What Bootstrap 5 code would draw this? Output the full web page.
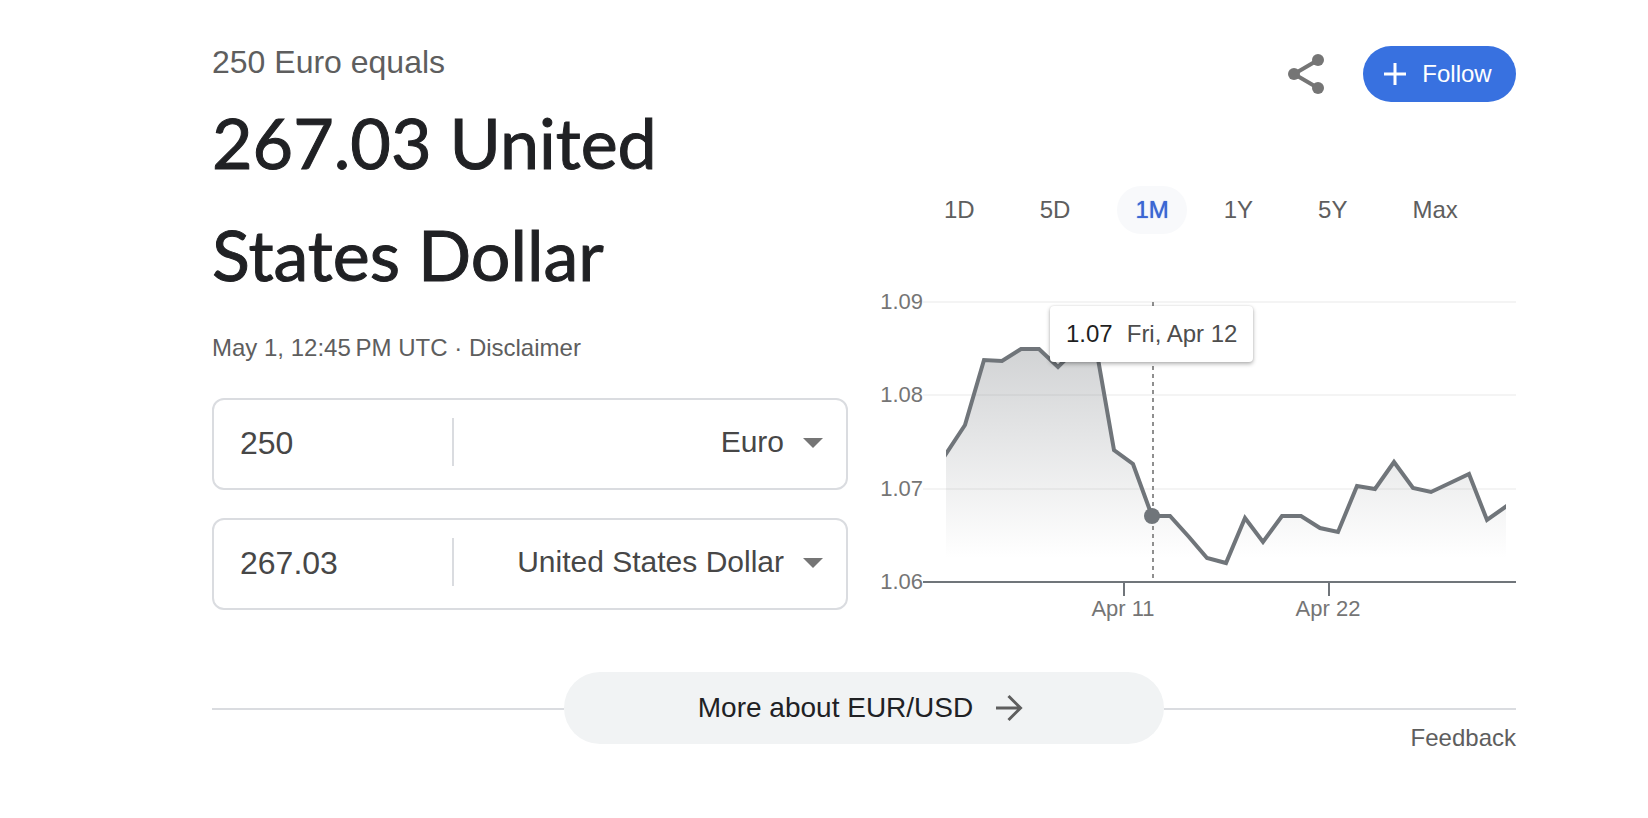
<!DOCTYPE html>
<html lang="en">
<head>
<meta charset="utf-8">
<meta name="viewport" content="width=device-width, initial-scale=1">
<title>EUR/USD converter</title>
<link rel="stylesheet" href="https://cdn.jsdelivr.net/npm/bootstrap@5.3.0/dist/css/bootstrap.min.css">
<style>
  body { font-family: "Liberation Sans", Arial, sans-serif; font-size: 24px; line-height: 32px; color: #5e5e5e; background: #fff; }
  .converter { padding: 42px 132px 40px 212px; }
  .panels { display: grid; grid-template-columns: minmax(0, 1fr) minmax(0, 1fr); column-gap: 32px; }
  .source-line { font-size: 32px; line-height: 40px; margin-bottom: 4px; }
  .result-line { font-family: Lato, "Open Sans", sans-serif; font-weight: 400; font-size: 70px; line-height: 112px; color: #202124; -webkit-text-stroke: 1px #202124; margin-bottom: 22px; }
  .text-link { color: inherit; text-decoration: none; }
  .boxes { gap: 28px; margin-top: 34px; }
  .currency-box { height: 92px; border: 2px solid #dadce0; border-radius: 12px; padding: 0 21px 0 26px; color: #474747; }
  .amount { width: 212px; font-size: 32px; color: inherit; border: 0; padding: 0 0 2px; background: none; outline: 0; }
  .rule { width: 2px; height: 48px; background: #dadce0; margin-bottom: 4px; }
  .currency { flex: 1; min-width: 0; font-size: 30px; color: inherit; border: 0; padding: 0 0 4px; background: none; appearance: none; text-align: right; text-align-last: right; outline: 0; }
  .caret { margin: 0 0 2px 17px; }
  .actions { padding-top: 4px; gap: 38px; }
  .follow { height: 56px; width: 153px; font-size: 24px; line-height: 32px; background: #3871e0; color: #fff; gap: 16px; padding: 0 3px 0 0; border: 0; }
  .ranges { margin-top: 84px; margin-left: 46px; gap: 29px; }
  .range { height: 48px; padding: 0 18px; border: 0; border-radius: 24px; background: none; color: #5e5e5e; }
  .range.active { background: #f8f9fb; color: #3b66d4; text-shadow: 0 0 1px #3b66d4; margin-right: -10px; }
  .chart { margin-top: 52px; }
  .chart svg text { font-size: 22px; fill: #757575; }
  .tip { left: 170px; top: 20px; height: 56px; padding: 0 16px; gap: 14px; background: #fff; border-radius: 4px; box-shadow: 0 2px 4px rgba(0,0,0,.3), 0 0 2px rgba(0,0,0,.12); color: #4d4d4d; white-space: nowrap; }
  .tip strong { font-weight: 400; color: #1f1f1f; }
  .more-row { display: grid; grid-template-columns: minmax(0, 1fr) 600px minmax(0, 1fr); margin-top: 46px; }
  .more-side { padding-top: 36px; }
  .more-line { height: 2px; background: #dadce0; margin-bottom: 12px; }
  .more-btn { height: 72px; background: #f1f3f4; color: #202124; font-size: 28px; gap: 20px; border: 0; padding: 0 5px 0 0; }
</style>
</head>
<body>
<main class="converter">
  <div class="panels">
    <section>
      <div class="source-line">250 Euro equals</div>
      <h1 class="result-line">267.03 United<br>States Dollar</h1>
      <div>May 1, 12:45&#8239;PM UTC · <a class="text-link" href="#">Disclaimer</a></div>
      <form class="boxes d-flex flex-column">
        <div class="currency-box d-flex align-items-center">
          <input class="amount" type="text" value="250" aria-label="Amount in euro">
          <span class="rule"></span>
          <select class="currency" aria-label="Source currency"><option>Euro</option></select>
          <svg class="caret" width="24" height="12" viewBox="0 0 24 12" aria-hidden="true"><path d="M2 1h20L12 11z" fill="#757575"/></svg>
        </div>
        <div class="currency-box d-flex align-items-center">
          <input class="amount" type="text" value="267.03" aria-label="Amount in dollars">
          <span class="rule"></span>
          <select class="currency" aria-label="Target currency"><option>United States Dollar</option></select>
          <svg class="caret" width="24" height="12" viewBox="0 0 24 12" aria-hidden="true"><path d="M2 1h20L12 11z" fill="#757575"/></svg>
        </div>
      </form>
    </section>
    <section>
      <div class="actions d-flex justify-content-end align-items-center">
        <button type="button" class="btn p-0 border-0 d-flex" aria-label="Share">
          <svg width="38" height="40" viewBox="0 0 38 40" aria-hidden="true"><path d="M31 6 7 20l24 14" fill="none" stroke="#757575" stroke-width="4"/><g fill="#757575"><circle cx="31" cy="6" r="6"/><circle cx="7" cy="20" r="6"/><circle cx="31" cy="34" r="6"/></g></svg>
        </button>
        <button type="button" class="btn follow rounded-pill d-flex align-items-center justify-content-center">
          <svg width="22" height="22" viewBox="0 0 22 22" aria-hidden="true"><path d="M11 0v22M0 11h22" stroke="#fff" stroke-width="3"/></svg>
          <span>Follow</span>
        </button>
      </div>
      <div class="ranges d-flex">
        <button type="button" class="range">1D</button>
        <button type="button" class="range">5D</button>
        <button type="button" class="range active">1M</button>
        <button type="button" class="range">1Y</button>
        <button type="button" class="range">5Y</button>
        <button type="button" class="range">Max</button>
      </div>
      <div class="chart position-relative">
        <svg class="d-block w-100" viewBox="0 0 636 340" role="img" aria-label="EUR to USD, one month">
          <defs>
            <linearGradient id="fade" gradientUnits="userSpaceOnUse" x1="0" y1="56" x2="0" y2="272">
              <stop offset="0" stop-color="#70757a" stop-opacity=".33"/><stop offset="1" stop-color="#70757a" stop-opacity="0"/>
            </linearGradient>
            <clipPath id="plot"><rect x="66" y="0" width="560" height="296"/></clipPath>
          </defs>
          <path d="M43 16h593M43 109h593M43 203h593" stroke="#f4f4f4" stroke-width="2"/>
          <g clip-path="url(#plot)">
            <path fill="url(#fade)" d="M66 168 85 139 104 74 122 75 141 63 159 63 178 81 197 62 215 56 234 164 253 178 272 230 290 230 309 251 327 272 346 277 365 232 383 256 402 230 421 230 440 242 458 246 477 200 495 203 514 176 533 202 551 206 570 197 589 188 607 234 626 220V272H66z"/>
            <path fill="none" stroke="#70757a" stroke-width="4" d="M64 171 85 139 104 74 122 75 141 63 159 63 178 81 197 62 215 56 234 164 253 178 272 230 290 230 309 251 327 272 346 277 365 232 383 256 402 230 421 230 440 242 458 246 477 200 495 203 514 176 533 202 551 206 570 197 589 188 607 234 628 219"/>
          </g>
          <path d="M273 16v276" stroke="#8f8f8f" stroke-width="2" stroke-dasharray="4 4"/>
          <circle cx="272" cy="230" r="8" fill="#70757a"/>
          <path d="M43 296h593M244 296v14M449 296v14" stroke="#70757a" stroke-width="2"/>
          <g text-anchor="end"><text x="43" y="23">1.09</text><text x="43" y="116">1.08</text><text x="43" y="210">1.07</text><text x="43" y="303">1.06</text></g>
          <text x="243" y="330" text-anchor="middle">Apr 11</text><text x="448" y="330" text-anchor="middle">Apr 22</text>
        </svg>
        <div class="tip position-absolute d-flex align-items-center"><strong>1.07</strong><span>Fri, Apr 12</span></div>
      </div>
    </section>
  </div>
  <div class="more-row">
    <div class="more-side"><div class="more-line"></div></div>
    <button type="button" class="btn more-btn rounded-pill d-flex align-items-center justify-content-center">
      <span>More about EUR/USD</span>
      <svg width="32" height="32" viewBox="0 0 32 32" aria-hidden="true"><path d="M3 16h24M15.500 4 27.500 16l-12 12" fill="none" stroke="#5e5e5e" stroke-width="3"/></svg>
    </button>
    <div class="more-side text-end"><div class="more-line"></div><a class="text-link" href="#">Feedback</a></div>
  </div>
</main>
<script src="https://cdn.jsdelivr.net/npm/bootstrap@5.3.0/dist/js/bootstrap.bundle.min.js"></script>
</body>
</html>
